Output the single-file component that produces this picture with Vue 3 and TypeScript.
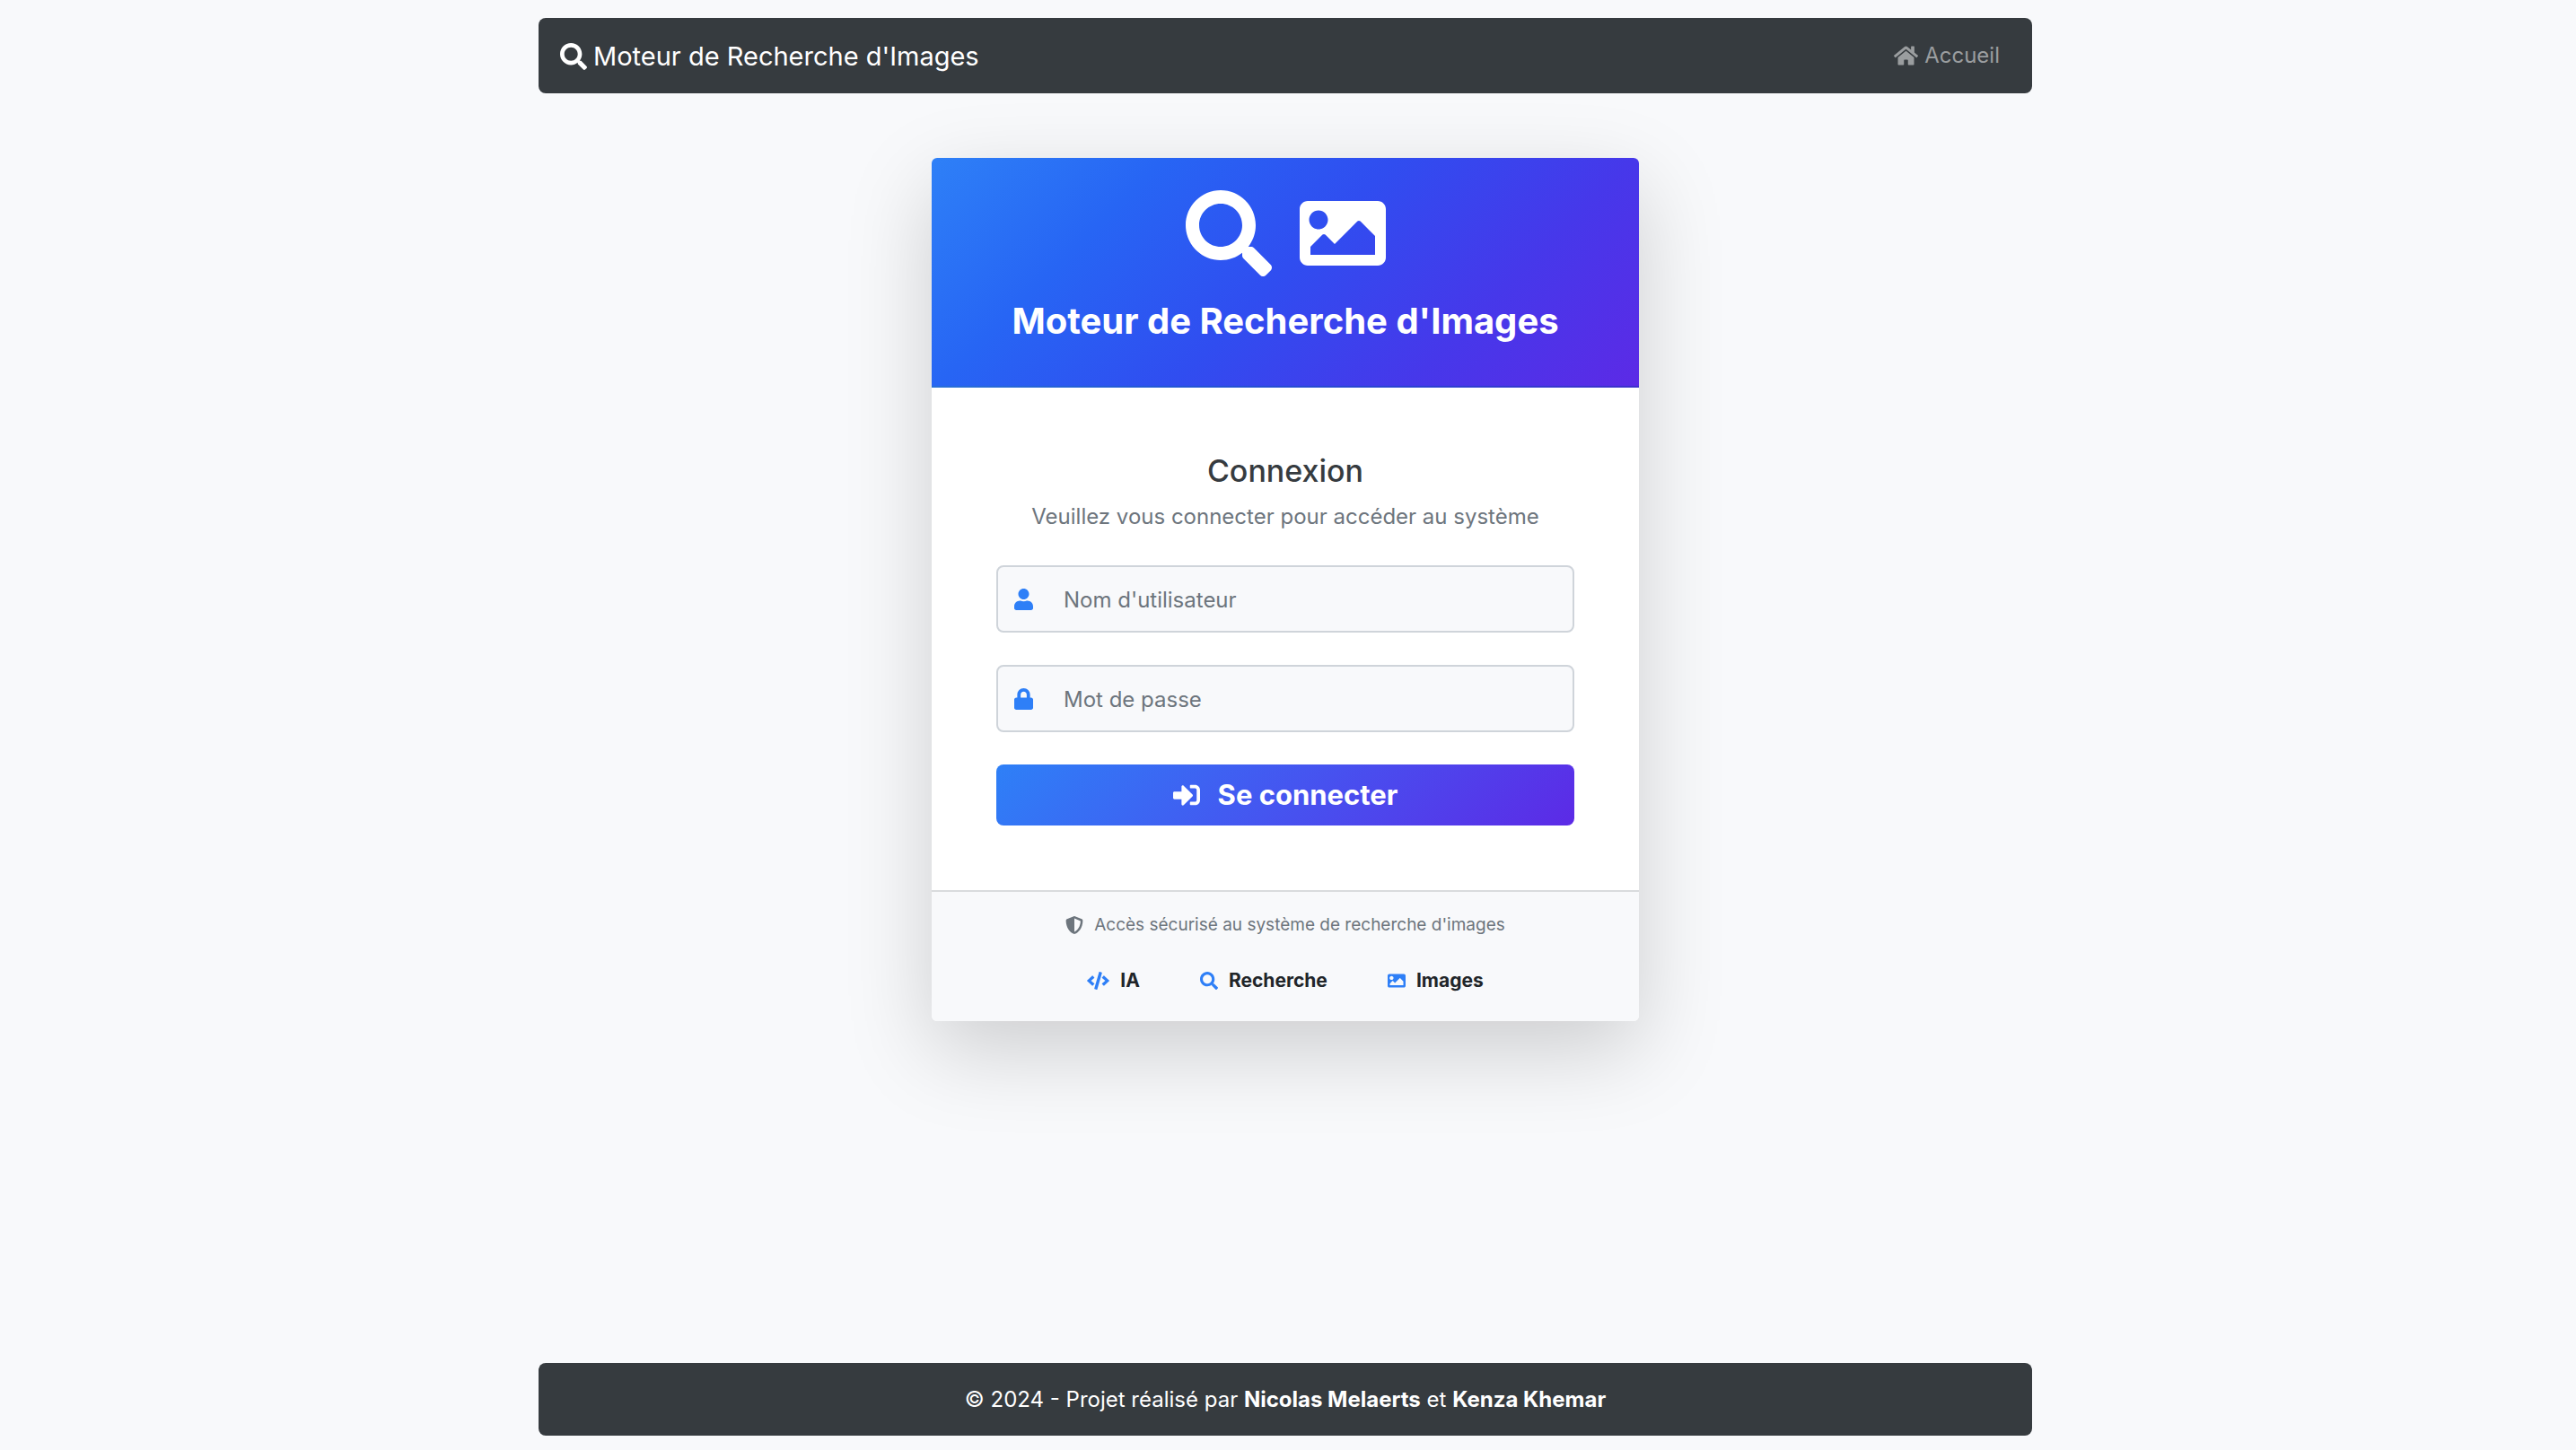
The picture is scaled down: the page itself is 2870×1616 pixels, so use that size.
<script setup lang="ts">
import { ref } from 'vue'

interface Icon {
  width: number
  path: string
}

interface Field {
  id: string
  type: string
  placeholder: string
  icon: string
}

interface Feature {
  label: string
  icon: string
}

const icons: Record<string, Icon> = {
  search: {
    width: 512,
    path: 'M505 442.7L405.3 343c-4.5-4.5-10.6-7-17-7H372c27.6-35.3 44-79.7 44-128C416 93.1 322.9 0 208 0S0 93.1 0 208s93.1 208 208 208c48.3 0 92.7-16.4 128-44v16.3c0 6.4 2.5 12.5 7 17l99.7 99.7c9.4 9.4 24.6 9.4 33.9 0l28.3-28.3c9.4-9.4 9.4-24.6.1-34zM208 336c-70.7 0-128-57.2-128-128 0-70.7 57.2-128 128-128 70.7 0 128 57.2 128 128 0 70.7-57.2 128-128 128z',
  },
  image: {
    width: 512,
    path: 'M464 448H48c-26.51 0-48-21.49-48-48V112c0-26.51 21.49-48 48-48h416c26.51 0 48 21.49 48 48v288c0 26.51-21.49 48-48 48zM112 120c-30.928 0-56 25.072-56 56s25.072 56 56 56 56-25.072 56-56-25.072-56-56-56zM64 384h384V272l-87.515-87.515c-4.686-4.686-12.284-4.686-16.971 0L208 320l-55.515-55.515c-4.686-4.686-12.284-4.686-16.971 0L64 336v48z',
  },
  home: {
    width: 576,
    path: 'M280.37 148.26L96 300.11V464a16 16 0 0 0 16 16l112.06-.29a16 16 0 0 0 15.92-16V368a16 16 0 0 1 16-16h64a16 16 0 0 1 16 16v95.64a16 16 0 0 0 16 16.05L464 480a16 16 0 0 0 16-16V300L295.67 148.26a12.19 12.19 0 0 0-15.3 0zM571.6 251.47L488 182.56V44.05a12 12 0 0 0-12-12h-56a12 12 0 0 0-12 12v72.61L318.47 43a48 48 0 0 0-61 0L4.34 251.47a12 12 0 0 0-1.6 16.9l25.5 31A12 12 0 0 0 45.15 301l235.22-193.74a12.19 12.19 0 0 1 15.3 0L530.9 301a12 12 0 0 0 16.9-1.6l25.5-31a12 12 0 0 0-1.7-16.93z',
  },
  user: {
    width: 448,
    path: 'M224 256c70.7 0 128-57.3 128-128S294.7 0 224 0 96 57.3 96 128s57.3 128 128 128zm89.6 32h-16.7c-22.2 10.2-46.9 16-72.9 16s-50.6-5.8-72.9-16h-16.7C60.2 288 0 348.2 0 422.4V464c0 26.5 21.5 48 48 48h352c26.5 0 48-21.5 48-48v-41.6c0-74.2-60.2-134.4-134.4-134.4z',
  },
  lock: {
    width: 448,
    path: 'M400 224h-24v-72C376 68.2 307.8 0 224 0S72 68.2 72 152v72H48c-26.5 0-48 21.5-48 48v192c0 26.5 21.5 48 48 48h352c26.5 0 48-21.5 48-48V272c0-26.5-21.5-48-48-48zm-104 0H152v-72c0-39.7 32.3-72 72-72s72 32.3 72 72v72z',
  },
  signIn: {
    width: 512,
    path: 'M416 448h-84c-6.6 0-12-5.4-12-12v-40c0-6.6 5.4-12 12-12h84c17.7 0 32-14.3 32-32V160c0-17.7-14.3-32-32-32h-84c-6.6 0-12-5.4-12-12V76c0-6.6 5.4-12 12-12h84c53 0 96 43 96 96v192c0 53-43 96-96 96zm-47-201L201 79c-15-15-41-4.5-41 17v96H24c-13.3 0-24 10.7-24 24v96c0 13.3 10.7 24 24 24h136v96c0 21.5 26 32 41 17l168-168c9.3-9.4 9.3-24.6 0-34z',
  },
  shield: {
    width: 512,
    path: 'M466.5 83.7l-192-80a48.15 48.15 0 0 0-36.9 0l-192 80C27.7 91.1 16 108.6 16 128c0 198.5 114.5 335.7 221.5 380.3 11.8 4.9 25.1 4.9 36.9 0C360.1 472.6 496 349.3 496 128c0-19.4-11.7-36.9-29.5-44.3zM256.1 446.3l-.1-381 175.9 73.3c-3.3 151.4-82.1 261.1-175.8 307.7z',
  },
  code: {
    width: 640,
    path: 'M278.9 511.5l-61-17.7c-6.4-1.8-10-8.5-8.2-14.9L346.2 8.7c1.8-6.4 8.5-10 14.9-8.2l61 17.7c6.4 1.8 10 8.5 8.2 14.9L293.8 503.3c-1.9 6.4-8.5 10.1-14.9 8.2zm-114-112.2l43.5-46.4c4.6-4.9 4.3-12.7-.8-17.2L117 256l90.6-79.7c5.1-4.5 5.5-12.3.8-17.2l-43.5-46.4c-4.5-4.8-12.1-5.1-17-.5L3.8 247.2c-5.1 4.7-5.1 12.8 0 17.5l144.1 135.1c4.9 4.6 12.5 4.4 17-.5zm327.2.6l144.1-135.1c5.1-4.7 5.1-12.8 0-17.5L492.1 112.1c-4.8-4.5-12.4-4.3-17 .5L431.6 159c-4.6 4.9-4.3 12.7.8 17.2L523 256l-90.6 79.7c-5.1 4.5-5.5 12.3-.8 17.2l43.5 46.4c4.5 4.9 12.1 5.1 17 .6z',
  },
}

const fields: Field[] = [
  { id: 'username', type: 'text', placeholder: "Nom d'utilisateur", icon: 'user' },
  { id: 'password', type: 'password', placeholder: 'Mot de passe', icon: 'lock' },
]

const features: Feature[] = [
  { label: 'IA', icon: 'code' },
  { label: 'Recherche', icon: 'search' },
  { label: 'Images', icon: 'image' },
]

const values = ref<Record<string, string>>({ username: '', password: '' })

const box = (name: string): string => `0 0 ${icons[name].width} 512`
</script>

<template>
  <div class="page">
    <nav class="navbar">
      <a class="brand" href="#">
        <svg class="icon" :viewBox="box('search')" aria-hidden="true"><path :d="icons.search.path" /></svg>
        <span>Moteur de Recherche d'Images</span>
      </a>
      <a class="nav-link" href="#">
        <svg class="icon" :viewBox="box('home')" aria-hidden="true"><path :d="icons.home.path" /></svg>
        <span>Accueil</span>
      </a>
    </nav>

    <main class="card">
      <header class="card-header">
        <div class="hero-icons">
          <svg class="icon" :viewBox="box('search')" aria-hidden="true"><path :d="icons.search.path" /></svg>
          <svg class="icon" :viewBox="box('image')" aria-hidden="true"><path :d="icons.image.path" /></svg>
        </div>
        <h1>Moteur de Recherche d'Images</h1>
      </header>

      <form class="card-body" @submit.prevent>
        <h2>Connexion</h2>
        <p class="lead">Veuillez vous connecter pour accéder au système</p>
        <label v-for="field in fields" :key="field.id" class="field" :for="field.id">
          <svg class="icon" :viewBox="box(field.icon)" aria-hidden="true"><path :d="icons[field.icon].path" /></svg>
          <input
            :id="field.id"
            v-model="values[field.id]"
            :type="field.type"
            :placeholder="field.placeholder"
            :aria-label="field.placeholder"
          />
        </label>
        <button class="submit" type="submit">
          <svg class="icon" :viewBox="box('signIn')" aria-hidden="true"><path :d="icons.signIn.path" /></svg>
          <span>Se connecter</span>
        </button>
      </form>

      <footer class="card-footer">
        <p class="notice">
          <svg class="icon" :viewBox="box('shield')" aria-hidden="true"><path :d="icons.shield.path" /></svg>
          <span>Accès sécurisé au système de recherche d'images</span>
        </p>
        <ul class="features">
          <li v-for="feature in features" :key="feature.label">
            <svg class="icon" :viewBox="box(feature.icon)" aria-hidden="true"><path :d="icons[feature.icon].path" /></svg>
            <span>{{ feature.label }}</span>
          </li>
        </ul>
      </footer>
    </main>

    <footer class="site-footer">
      <p>© 2024 - Projet réalisé par <strong>Nicolas Melaerts</strong> et <strong>Kenza Khemar</strong></p>
    </footer>
  </div>
</template>

<style>
body {
  margin: 0;
  background: #f8f9fb;
}
</style>

<style scoped>
.page {
  box-sizing: border-box;
  display: flex;
  flex-direction: column;
  align-items: center;
  min-height: 100vh;
  padding: 20px 6px 16px 0;
  background: #f8f9fb;
  color: #212529;
  font-family: Inter, "Liberation Sans", sans-serif;
  font-size: 24px;
  line-height: 36px;
}

.page * {
  box-sizing: border-box;
}

h1,
h2,
p,
ul {
  margin: 0;
  padding: 0;
}

.icon {
  flex: none;
  height: 1em;
  fill: currentColor;
}

.navbar {
  display: flex;
  align-items: flex-start;
  justify-content: space-between;
  width: 58.1%;
  padding: 20px 24px 18px;
  border-radius: 8px;
  background: #363b3f;
}

.brand,
.nav-link {
  display: flex;
  align-items: center;
  gap: 7px;
  text-decoration: none;
}

.brand {
  color: #fff;
  font-size: 29px;
  line-height: 46px;
}

.brand .icon {
  font-size: 30px;
}

.nav-link {
  padding: 0 12px;
  color: #9a9d9f;
  line-height: 44px;
}

.card {
  width: 788px;
  max-width: 100%;
  margin: 72px 0;
  border-radius: 6px;
  background: #fff;
  box-shadow: 0 32px 96px rgba(0, 0, 0, 0.175);
}

.card-header {
  padding: 36px 36px 46px;
  border-bottom: 2px solid rgba(0, 0, 0, 0.125);
  border-radius: 6px 6px 0 0;
  background-image: linear-gradient(135deg, #2e80f7, #2765f4 25%, #304df0 50%, #4638ea 75%, #5c2ae6);
  color: #fff;
  text-align: center;
}

.hero-icons {
  display: flex;
  justify-content: center;
  gap: 31px;
  margin-bottom: 24px;
  font-size: 96px;
}

h1 {
  font-size: 40px;
  font-weight: 700;
  line-height: 52px;
}

.card-body {
  display: flex;
  flex-direction: column;
  padding: 72px;
}

h2 {
  margin-bottom: 12px;
  color: #363b3f;
  font-size: 34px;
  font-weight: 500;
  line-height: 42px;
  text-align: center;
}

.lead {
  margin-bottom: 36px;
  color: #6d757d;
  text-align: center;
}

.field {
  display: flex;
  align-items: center;
  gap: 34px;
  margin-bottom: 36px;
  padding: 0 18px;
  border: 2px solid #cfd4da;
  border-radius: 8px;
  background: #f8f9fb;
}

.field .icon {
  color: #2e7ff7;
}

.field input {
  flex: 1;
  min-width: 0;
  height: 71px;
  padding: 2px 0 0;
  border: 0;
  outline: 0;
  background: transparent;
  color: #495057;
  font: inherit;
}

.field input::placeholder {
  color: #6d757d;
  opacity: 1;
}

.submit {
  display: flex;
  align-items: center;
  justify-content: center;
  gap: 20px;
  padding: 12px;
  border: 0;
  border-radius: 8px;
  background: linear-gradient(135deg, #2e80f7, #4555f0 50%, #5c2ae6);
  color: #fff;
  font-family: inherit;
  font-size: 30px;
  font-weight: 700;
  line-height: 44px;
}

.submit span {
  font-size: 31px;
}

.card-footer {
  padding: 22px 36px 30px;
  border-top: 2px solid #d9dbdd;
  border-radius: 0 0 6px 6px;
  background: #f8f9fb;
  font-size: 20px;
  line-height: 30px;
}

.notice,
.features,
.features li {
  display: flex;
  align-items: center;
  justify-content: center;
  gap: 12px;
}

.notice {
  margin-bottom: 32px;
  color: #6d757d;
}

.notice span {
  font-size: 19px;
}

.features {
  gap: 67px;
  font-weight: 700;
  list-style: none;
}

.features span {
  font-size: 21px;
}

.features .icon {
  color: #2e7ff7;
}

.site-footer {
  width: 58.1%;
  margin-top: auto;
  padding: 23px 24px 22px;
  border-radius: 8px;
  background: #363b3f;
  color: #fff;
  text-align: center;
}

strong {
  font-weight: 700;
}
</style>
